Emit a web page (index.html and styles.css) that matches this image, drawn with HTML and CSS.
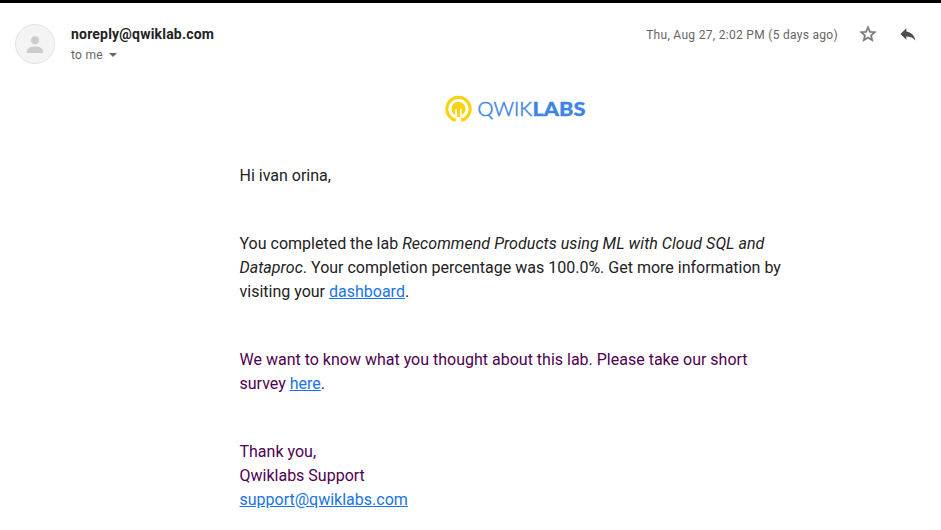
FILE: index.html
```html
<!DOCTYPE html>
<html lang="en">
<head>
<meta charset="utf-8">
<title>Qwiklabs</title>
<link rel="stylesheet" href="styles.css">
</head>
<body>
<header class="header">
  <svg class="avatar" viewBox="0 0 40 40"><circle cx="20" cy="20" r="19.5" fill="#f4f4f4" stroke="#e2e2e2"/><circle cx="20" cy="16.3" r="4" fill="#ccc"/><path d="M12 29v-2.200c0-2.800 4.800-4.300 8-4.300s8 1.500 8 4.300V29z" fill="#ccc"/></svg>
  <div class="sender">
    <div class="name">noreply@qwiklab.com</div>
    <div class="to">to me <span class="caret"></span></div>
  </div>
  <div class="date">Thu, Aug 27, 2:02 PM (5 days ago)</div>
  <svg class="icon star" viewBox="0 0 24 24"><path fill="#777" stroke="#777" stroke-width=".5" d="M22 9.240l-7.190-.62L12 2 9.190 8.630 2 9.240l5.460 4.730L5.820 21 12 17.270 18.180 21l-1.630-7.030L22 9.240zM12 15.400l-3.760 2.270 1-4.280-3.320-2.880 4.380-.38L12 6.100l1.710 4.040 4.380.38-3.320 2.880 1 4.280L12 15.400z"/></svg>
  <svg class="icon" viewBox="0 0 24 24"><path fill="#4d4d4d" d="M10 9V5l-7 7 7 7v-4.100c5 0 8.500 1.600 11 5.100-1-5-4-10-11-11z"/></svg>
</header>
<main class="message">
  <svg class="logo" viewBox="0 0 142 30">
    <path d="M11.100 25.300A11.600 11.600 0 1 1 15.900 25.300" fill="none" stroke="#f9d30f" stroke-width="3.200"/>
    <path d="M10.500 20.400A7.200 7.200 0 1 1 16.500 20.400V14H10.500z" fill="#f9d30f"/>
    <path d="M11.300 14V22M15.700 14V22" stroke="#fff" stroke-width="1.400"/>
    <path d="M12 13H15V22H12z" fill="#f9d30f"/>
    <text class="logo-light" x="32.500" y="21" textLength="54.500" lengthAdjust="spacingAndGlyphs">QWIK</text>
    <text class="logo-bold" x="87.500" y="21" textLength="53" lengthAdjust="spacingAndGlyphs">LABS</text>
  </svg>
  <p>Hi ivan orina,</p>
  <p>You completed the lab <em>Recommend Products using ML with Cloud SQL and Dataproc</em>. Your completion percentage was 100.0%. Get more information by visiting your <a href="#">dashboard</a>.</p>
  <p class="quoted">We want to know what you thought about this lab. Please take our short survey <a href="#">here</a>.</p>
  <p class="quoted">Thank you,<br>Qwiklabs Support<br><a href="#">support@qwiklabs.com</a></p>
</main>
</body>
</html>
```
FILE: styles.css
```css
body {
  margin: 0;
  height: 530px;
  box-sizing: border-box;
  overflow: hidden;
  border-top: 3px solid #000;
  background: #fff;
  font-family: Roboto, sans-serif;
  color: #222;
}
.header {
  display: flex;
  align-items: flex-start;
  height: 70px;
  padding: 21px 23px 0 15px;
  box-sizing: border-box;
}
.avatar {
  width: 40px;
  height: 40px;
}
.sender {
  flex: 1;
  margin-left: 16px;
}
.name {
  font-size: 14px;
  font-weight: 700;
  line-height: 20px;
  letter-spacing: 0.2px;
}
.to {
  display: flex;
  align-items: center;
  gap: 6px;
  margin-top: 1px;
  font-size: 12px;
  line-height: 20px;
  letter-spacing: 0.3px;
  color: #666;
}
.caret {
  border: 4px solid transparent;
  border-top-color: #666;
  border-bottom: 0;
}
.date {
  margin-top: 1px;
  font-size: 12px;
  line-height: 20px;
  letter-spacing: 0.3px;
  color: #666;
}
.icon {
  width: 20px;
  height: 20px;
  margin-left: 20px;
}
.message {
  width: 550px;
  margin-left: 239.5px;
  font-size: 16px;
  line-height: 24px;
}
.logo {
  display: block;
  width: 142px;
  height: 30px;
  margin: 22px 0 39px 205px;
}
.logo-light,
.logo-bold {
  font-family: Lato, sans-serif;
  font-size: 19.500px;
  fill: #3d84e6;
}
.logo-light {
  font-weight: 300;
  stroke: #3d84e6;
  stroke-width: 0.5px;
}
.logo-bold {
  font-weight: 900;
  stroke: #3d84e6;
  stroke-width: 0.3px;
}
p {
  margin: 0 0 44px;
}
em {
  letter-spacing: 0.05px;
}
.quoted {
  color: #500050;
}
a {
  color: #1a73e8;
}
```
